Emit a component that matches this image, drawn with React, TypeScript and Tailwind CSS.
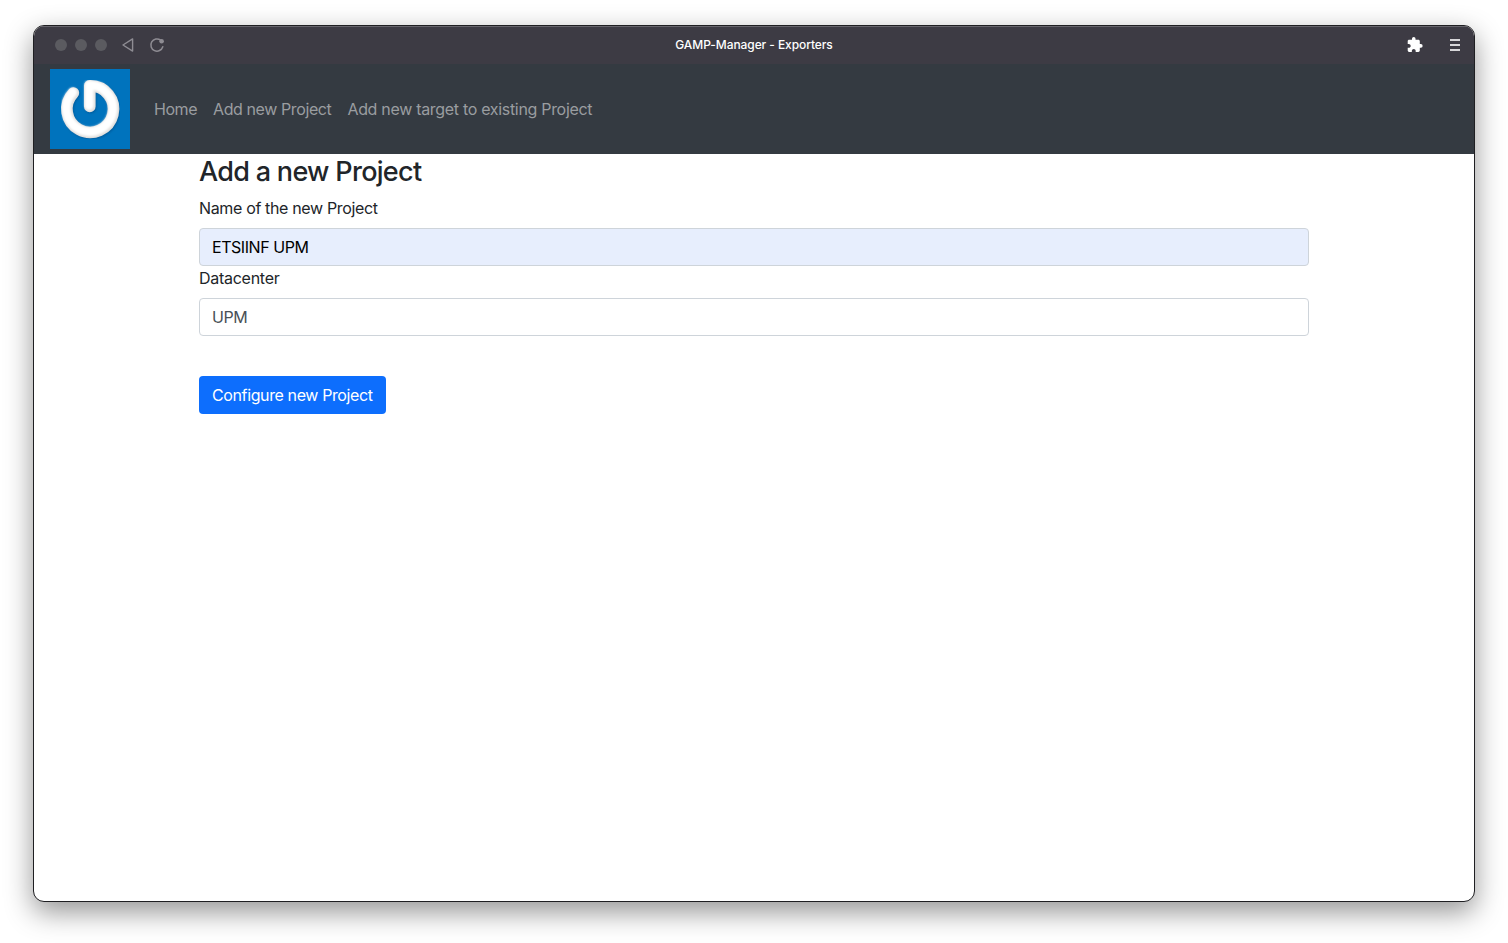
function TitleBar() {
  return (
    <header className="grid h-[38px] shrink-0 grid-cols-[1fr_auto_1fr] items-center bg-[#3d3b44] shadow-[inset_0_1px_0_#67656c]">
      <div className="flex items-center pl-[21px]">
        <div className="flex gap-2">
          <span className="size-3 rounded-full bg-[#5b5b60]" />
          <span className="size-3 rounded-full bg-[#5b5b60]" />
          <span className="size-3 rounded-full bg-[#5b5b60]" />
        </div>
        <svg className="ml-[13px] size-4" viewBox="0 0 16 16" fill="none" stroke="#8e8c93" strokeWidth="1.4" strokeLinejoin="round">
          <path d="M12.6 1.9V14.1L3 8Z" />
        </svg>
        <svg className="ml-[13px] size-4" viewBox="0 0 16 16" fill="none" stroke="#8e8c93" strokeWidth="1.5" strokeLinecap="round">
          <path d="M13.8 9.8A6.1 6.1 0 1 1 11.6 3.1" />
          <circle cx="12.6" cy="4.3" r="2.3" fill="#8e8c93" stroke="none" />
        </svg>
      </div>
      <h1 className="text-xs font-medium tracking-[-0.08px] text-white">GAMP-Manager - Exporters</h1>
      <div className="flex items-center justify-end pr-[14px]">
        <svg className="size-4" viewBox="1 1 22.5 22.5" fill="#fff">
          <path d="M20.5 11H19V7c0-1.1-.9-2-2-2h-4V3.5a2.5 2.5 0 0 0-5 0V5H4c-1.1 0-1.99.9-1.99 2v3.8H3.5c1.49 0 2.7 1.21 2.7 2.7s-1.21 2.7-2.7 2.7H2V20c0 1.1.9 2 2 2h3.8v-1.5c0-1.49 1.21-2.7 2.7-2.7s2.7 1.21 2.7 2.7V22H17c1.1 0 2-.9 2-2v-4h1.5a2.5 2.5 0 0 0 0-5z" />
        </svg>
        <svg className="ml-[27px] h-3 w-2.5" viewBox="0 0 10 12" fill="#d8d7da">
          <path d="M0 0h10v2H0zM0 5h10v2H0zM0 10h10v2H0z" />
        </svg>
      </div>
    </header>
  );
}

function Logo() {
  return (
    <svg className="size-20" viewBox="0 0 80 80" fill="none" strokeLinecap="round" strokeLinejoin="round">
      <defs>
        <filter id="bevel" x="-10%" y="-10%" width="120%" height="120%">
          <feGaussianBlur stdDeviation="1.3" />
        </filter>
        <clipPath id="box">
          <path d="M0 0h80v80H0z" />
        </clipPath>
      </defs>
      <path d="M0 0h80v80H0z" fill="#0073bd" />
      <g clipPath="url(#box)">
        <path d="M23.4 24A23.3 23.3 0 1 0 39.8 16.8V37.4" stroke="#005c9c" strokeWidth="11.6" filter="url(#bevel)" transform="translate(.8 1)" />
        <path d="M23.4 24A23.3 23.3 0 1 0 39.8 16.8V37.4" stroke="#e0dedc" strokeWidth="11.6" />
        <path d="M23.4 24A23.3 23.3 0 1 0 39.8 16.8V37.4" stroke="#fff" strokeWidth="9" filter="url(#bevel)" transform="translate(-.7 -.8)" />
      </g>
    </svg>
  );
}

function NavBar() {
  return (
    <nav className="flex h-[90px] shrink-0 items-center bg-[#343a41] pl-4">
      <Logo />
      <div className="ml-6 flex gap-4 text-base whitespace-nowrap text-[#9a9da0]">
        <a className="tracking-[-0.45px]">Home</a>
        <a className="tracking-[-0.4px]">Add new Project</a>
        <a className="tracking-[-0.31px]">Add new target to existing Project</a>
      </div>
    </nav>
  );
}

export default function App() {
  return (
    <div className="flex h-[943px] w-[1508px] overflow-hidden bg-white px-[33px] pt-[25px] pb-[41px] font-['Inter',sans-serif]">
      <div className="flex flex-1 flex-col overflow-hidden rounded-[11px] border border-[#1f1f22] bg-white shadow-[0_10px_28px_rgba(0,0,0,0.42)]">
        <TitleBar />
        <NavBar />
        <main className="mx-[165px] flex flex-col items-start text-base text-[#212529]">
          <h3 className="mb-[7px] pt-px text-[27px] leading-[33.6px] font-medium tracking-[-0.7px]">Add a new Project</h3>
          <label className="mb-2 leading-6 tracking-[-0.35px]">Name of the new Project</label>
          <div className="flex h-[38px] w-full items-center rounded border border-[#ced4da] bg-[#e7eefd] px-3 tracking-[-0.45px] text-black">
            <span>ETSIINF UPM</span>
          </div>
          <label className="mb-2 leading-6 tracking-[-0.27px]">Datacenter</label>
          <div className="flex h-[38px] w-full items-center rounded border border-[#ced4da] bg-white px-3 tracking-[-0.5px] text-[#495057]">
            <span>UPM</span>
          </div>
          <button className="mt-10 h-[38px] w-[187px] rounded bg-[#0d6efd] pl-[13px] text-left tracking-[-0.38px] whitespace-nowrap text-white">
            Configure new Project
          </button>
        </main>
      </div>
    </div>
  );
}
